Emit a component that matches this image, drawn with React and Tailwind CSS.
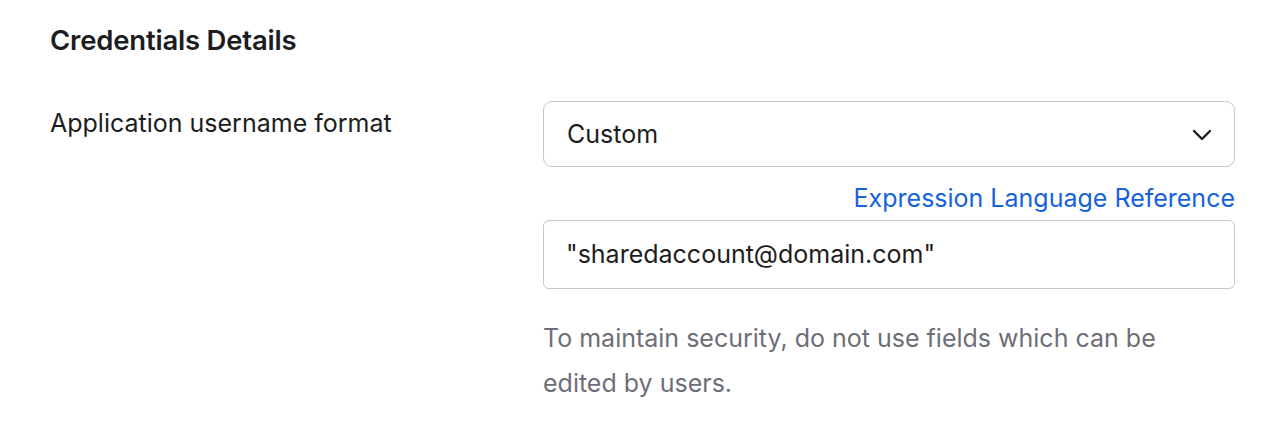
import React from "react";

function ChevronDown() {
  return (
    <svg width="20" height="12" viewBox="0 0 20 12" fill="none" className="text-[#1d1d21]">
      <path d="M2 2l8 8 8-8" stroke="currentColor" strokeWidth="2.4" strokeLinecap="round" strokeLinejoin="round" />
    </svg>
  );
}

export default function App() {
  return (
    <div className="w-[1286px] h-[422px] bg-white font-['Inter',sans-serif] text-[#1d1d21]">
      <div className="pl-[50px] pr-[51px] pt-[24px]">
        <h2 className="text-[27.5px] leading-[32px] font-semibold tracking-[-0.2px]">Credentials Details</h2>

        <div className="flex mt-[45px]">
          {/* label column */}
          <div className="w-[493px] pt-[6px]">
            <span className="text-[25px] leading-[32px]">Application username format</span>
          </div>

          {/* fields column */}
          <div className="flex-1 flex flex-col">
            <div className="h-[66px] border border-[#c7c7cc] rounded-[9px] flex items-center justify-between pl-[23px] pr-[22px] pt-[2px]">
              <span className="text-[25px]">Custom</span>
              <ChevronDown />
            </div>

            <div className="flex justify-end mt-[16px]">
              <a className="text-[25px] leading-[30px] text-[#1662dd]">Expression Language Reference</a>
            </div>

            <div className="h-[69px] mt-[7px] border border-[#c7c7cc] rounded-[6px] flex items-center pl-[22px]">
              <span className="text-[25px]">"sharedaccount@domain.com"</span>
            </div>

            <p className="mt-[27px] text-[25px] leading-[45px] text-[#6e6e78] w-[640px]">
              To maintain security, do not use fields which can be edited by users.
            </p>
          </div>
        </div>
      </div>
    </div>
  );
}
